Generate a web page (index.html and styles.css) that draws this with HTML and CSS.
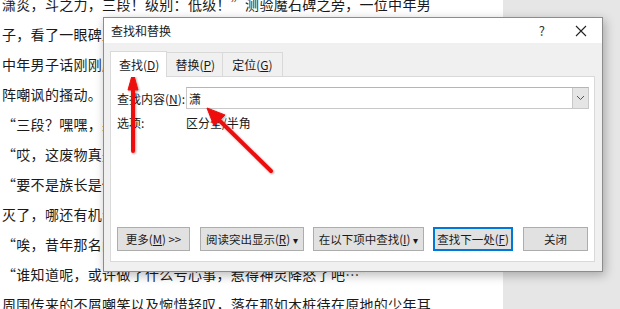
FILE: index.html
```html
<!DOCTYPE html>
<html lang="zh">
<head>
<meta charset="utf-8">
<link rel="stylesheet" href="styles.css">
</head>
<body>
<div class="stage">
  <div class="page">
    <div class="doc">
      <p>潇炎，斗之力，三段！级别：低级！”测验魔石碑之旁，一位中年男</p>
      <p>子，看了一眼碑上所显示出来的信息，语气漠然的将之公布了出来…</p>
      <p>中年男子话刚刚脱口，便是不出意外的在人头汹涌的广场上带起了一</p>
      <p>阵嘲讽的搔动。</p>
      <p>“三段？嘿嘿，果然不出我所料，这个“天才”这一年又是在原地踏步！”</p>
      <p>“哎，这废物真是把家族的脸都给丢光了。”</p>
      <p>“要不是族长是他的父亲，这种废物，早就被驱赶出家族，任其自生自</p>
      <p>灭了，哪还有机会待在家族中白吃白喝。”</p>
      <p>“唉，昔年那名闻乌坦城的天才少年，如今怎么落魄成这般模样了啊？”</p>
      <p>“谁知道呢，或许做了什么亏心事，惹得神灵降怒了吧…”</p>
      <p>周围传来的不屑嘲笑以及惋惜轻叹，落在那如木桩待在原地的少年耳</p>
    </div>
  </div>
  <div class="gutter"></div>

  <div class="dialog">
    <div class="titlebar">
      <span class="title">查找和替换</span>
      <span class="help">?</span>
      <svg class="close" width="12" height="12" viewBox="0 0 12 12"><path d="M1 1 L11 11 M11 1 L1 11" stroke="#222" stroke-width="1.1" fill="none"/></svg>
    </div>
    <div class="body">
      <div class="tabs">
        <div class="tab active">查找(<u>D</u>)</div>
        <div class="tab">替换(<u>P</u>)</div>
        <div class="tab">定位(<u>G</u>)</div>
      </div>
      <div class="panel">
        <div class="row">
          <span class="label">查找内容(<u>N</u>):</span>
          <div class="combo">
            <span class="value">潇</span>
            <span class="drop"><svg width="9" height="6" viewBox="0 0 9 6"><path d="M1 1 L4.5 4.5 L8 1" stroke="#555" stroke-width="1" fill="none"/></svg></span>
          </div>
        </div>
        <div class="row opts">
          <span class="label">选项:</span>
          <span>区分全/半角</span>
        </div>
        <div class="buttons">
          <div class="btn b1">更多(<u>M</u>) &gt;&gt;</div>
          <div class="btn b2">阅读突出显示(<u>R</u>) <span class="caret">▾</span></div>
          <div class="btn b3">在以下项中查找(<u>I</u>) <span class="caret">▾</span></div>
          <div class="btn b4 default">查找下一处(<u>F</u>)</div>
          <div class="btn b5">关闭</div>
        </div>
      </div>
    </div>
  </div>

  <svg class="arrows" width="620" height="309" viewBox="0 0 620 309">
    <defs>
      <filter id="sh" x="-20%" y="-20%" width="140%" height="140%">
        <feDropShadow dx="1" dy="1" stdDeviation="1" flood-color="#000" flood-opacity="0.35"/>
      </filter>
    </defs>
    <g filter="url(#sh)" fill="#ee1111" stroke="#ee1111">
      <line x1="133" y1="151" x2="133" y2="86" stroke-width="4" stroke-linecap="round"/>
      <polygon points="133,72 128,90 138,90" stroke-width="1"/>
      <line x1="271" y1="171" x2="218" y2="119" stroke-width="4" stroke-linecap="round"/>
      <polygon points="207,108 214,126 225,115" stroke-width="1"/>
    </g>
  </svg>
</div>
</body>
</html>
```
FILE: styles.css
```css
* { box-sizing: border-box; }
html, body { margin: 0; padding: 0; }
body {
  width: 620px;
  height: 309px;
  overflow: hidden;
  background: #e6e6e6;
}
.stage {
  position: relative;
  display: flex;
  width: 620px;
  height: 309px;
  overflow: hidden;
}
.page {
  width: 503px;
  height: 309px;
  background: #ffffff;
  overflow: hidden;
}
.gutter {
  flex: 1;
  background: #e6e6e6;
}
.doc {
  margin-top: -11px;
  padding-left: 2px;
  font-family: "Noto Sans CJK SC", sans-serif;
  font-size: 14px;
  letter-spacing: 0.3px;
  color: #1a1a1a;
}
.doc p {
  margin: 0;
  height: 30px;
  line-height: 30px;
  white-space: nowrap;
}
.dialog {
  position: absolute;
  left: 103px;
  top: 17px;
  width: 500px;
  height: 255px;
  border: 1px solid #8c8c8c;
  background: #f0f0f0;
  box-shadow: 2px 3px 10px rgba(0,0,0,0.28);
  display: flex;
  flex-direction: column;
  font-family: "Noto Sans CJK SC", sans-serif;
  font-size: 12px;
  color: #1a1a1a;
}
.titlebar {
  height: 25px;
  background: #ffffff;
  display: flex;
  align-items: center;
  padding-left: 7px;
  padding-right: 15px;
}
.title { flex: 1; }
.help {
  font-size: 13px;
  color: #333;
  margin-right: 30px;
}
.body {
  flex: 1;
  display: flex;
  flex-direction: column;
  padding: 9px 7px 9px 6px;
}
.tabs {
  display: flex;
  height: 24px;
  align-items: flex-end;
}
.tab {
  height: 24px;
  padding: 0 7px;
  display: flex;
  align-items: center;
  border: 1px solid #d9d9d9;
  border-bottom: none;
  margin-left: -1px;
  background: #f0f0f0;
}
.tab.active {
  height: 26px;
  margin-left: 0;
  margin-bottom: -1px;
  background: #ffffff;
  padding: 0 7px 0 8px;
  position: relative;
  z-index: 1;
}
.tab:nth-child(2) { padding: 0 7px 0 8px; }
.tab:nth-child(3) { padding: 0 9px 0 9px; }
.panel {
  flex: 1;
  background: #ffffff;
  border: 1px solid #d9d9d9;
  display: flex;
  flex-direction: column;
  padding: 10px 5px 10px 6px;
}
.row {
  display: flex;
  align-items: center;
}
.label {
  width: 69px;
  flex: none;
}
.combo {
  flex: 1;
  height: 22px;
  border: 1px solid #c8c8c8;
  border-top-color: #b5b5b5;
  display: flex;
  align-items: center;
  padding-left: 2px;
}
.value { flex: 1; font-size: 12px; }
.drop {
  width: 16px;
  height: 20px;
  background: #e5e5e5;
  border-left: 1px solid #c8c8c8;
  display: flex;
  align-items: center;
  justify-content: center;
}
.opts {
  margin-top: 5px;
  height: 16px;
}
.buttons {
  margin-top: auto;
  display: flex;
}
.btn {
  height: 24px;
  background: #e1e1e1;
  border: 1px solid #adadad;
  display: flex;
  align-items: center;
  justify-content: center;
  font-size: 11.5px;
  white-space: nowrap;
}
.caret { font-size: 10px; margin-left: 3px; }
.b1 { width: 73px; }
.b2 { width: 104px; margin-left: 10px; }
.b3 { width: 111px; margin-left: 9px; }
.b4 { width: 80px; margin-left: 9px; }
.b5 { width: 65px; margin-left: 10px; }
.default {
  border: 1px solid #0078d7;
  box-shadow: inset 0 0 0 1px #0078d7;
}
.arrows {
  position: absolute;
  left: 0;
  top: 0;
  pointer-events: none;
}
```
